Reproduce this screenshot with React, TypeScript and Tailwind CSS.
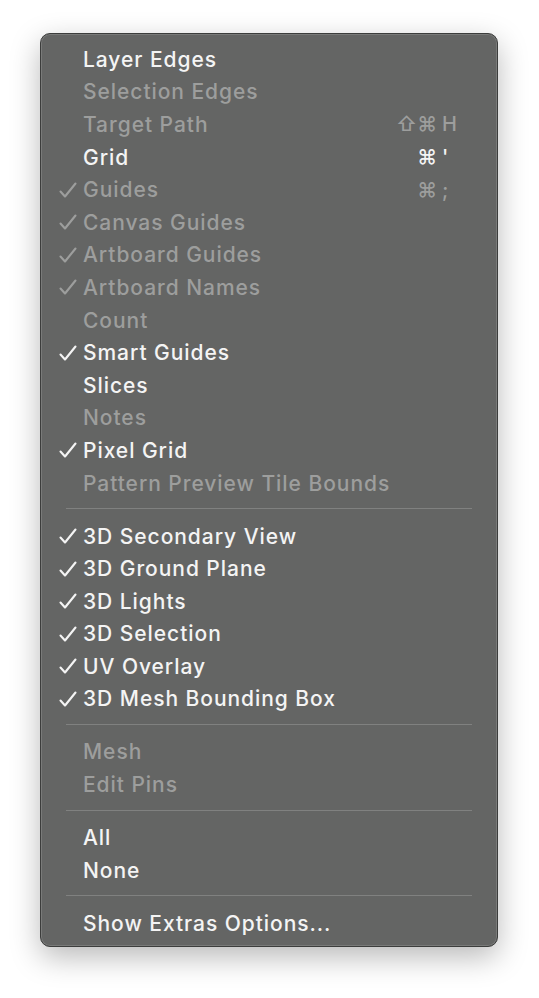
import React from "react";

type Item =
  | { kind: "sep" }
  | {
      kind: "item";
      label: string;
      enabled: boolean;
      checked?: boolean;
      mod?: string;
      keyChar?: string;
    };

const ITEMS: Item[] = [
  { kind: "item", label: "Layer Edges", enabled: true },
  { kind: "item", label: "Selection Edges", enabled: false },
  { kind: "item", label: "Target Path", enabled: false, mod: "⇧⌘", keyChar: "H" },
  { kind: "item", label: "Grid", enabled: true, mod: "⌘", keyChar: "'" },
  { kind: "item", label: "Guides", enabled: false, checked: true, mod: "⌘", keyChar: ";" },
  { kind: "item", label: "Canvas Guides", enabled: false, checked: true },
  { kind: "item", label: "Artboard Guides", enabled: false, checked: true },
  { kind: "item", label: "Artboard Names", enabled: false, checked: true },
  { kind: "item", label: "Count", enabled: false },
  { kind: "item", label: "Smart Guides", enabled: true, checked: true },
  { kind: "item", label: "Slices", enabled: true },
  { kind: "item", label: "Notes", enabled: false },
  { kind: "item", label: "Pixel Grid", enabled: true, checked: true },
  { kind: "item", label: "Pattern Preview Tile Bounds", enabled: false },
  { kind: "sep" },
  { kind: "item", label: "3D Secondary View", enabled: true, checked: true },
  { kind: "item", label: "3D Ground Plane", enabled: true, checked: true },
  { kind: "item", label: "3D Lights", enabled: true, checked: true },
  { kind: "item", label: "3D Selection", enabled: true, checked: true },
  { kind: "item", label: "UV Overlay", enabled: true, checked: true },
  { kind: "item", label: "3D Mesh Bounding Box", enabled: true, checked: true },
  { kind: "sep" },
  { kind: "item", label: "Mesh", enabled: false },
  { kind: "item", label: "Edit Pins", enabled: false },
  { kind: "sep" },
  { kind: "item", label: "All", enabled: true },
  { kind: "item", label: "None", enabled: true },
  { kind: "sep" },
  { kind: "item", label: "Show Extras Options...", enabled: true },
];

function Check() {
  return (
    <svg width="18" height="16" viewBox="0 0 18 16" fill="none">
      <path
        d="M1.5 9.5 L6 14.5 L16.5 1.5"
        stroke="currentColor"
        strokeWidth="2.1"
        strokeLinecap="round"
        strokeLinejoin="round"
      />
    </svg>
  );
}

export default function App() {
  return (
    <div
      className="min-h-[998px] w-[539px] bg-white pl-[40px] pt-[33px]"
      style={{ fontFamily: "Inter, 'DejaVu Sans', sans-serif" }}
    >
      <div className="w-[458px] rounded-[10px] border border-[#3c3d3c] bg-[#646564] py-[8px] shadow-[0_10px_30px_rgba(0,0,0,0.28),inset_0_0_0_1px_rgba(255,255,255,0.14)]">
        {ITEMS.map((it, i) =>
          it.kind === "sep" ? (
            <div key={i} className="flex h-[20.4px] items-center px-[25px]">
              <div className="h-px w-full bg-[#808180]" />
            </div>
          ) : (
            <div
              key={i}
              className={`flex h-[32.6px] items-center pt-[2px] text-[21px] font-medium tracking-[0.95px] ${
                it.enabled ? "text-[#f4f4f4]" : "text-[#9d9e9d]"
              }`}
            >
              <div className="flex w-[42px] items-center justify-end pr-[6px]">
                {it.checked && <Check />}
              </div>
              <div className="flex-1 leading-none">{it.label}</div>
              {it.mod && (
                <div className="flex w-[105px] items-center text-[20px] leading-none tracking-normal">
                  <span className="w-[45px] text-right">{it.mod}</span>
                  <span className="pl-[5px]">{it.keyChar}</span>
                </div>
              )}
            </div>
          )
        )}
      </div>
    </div>
  );
}
